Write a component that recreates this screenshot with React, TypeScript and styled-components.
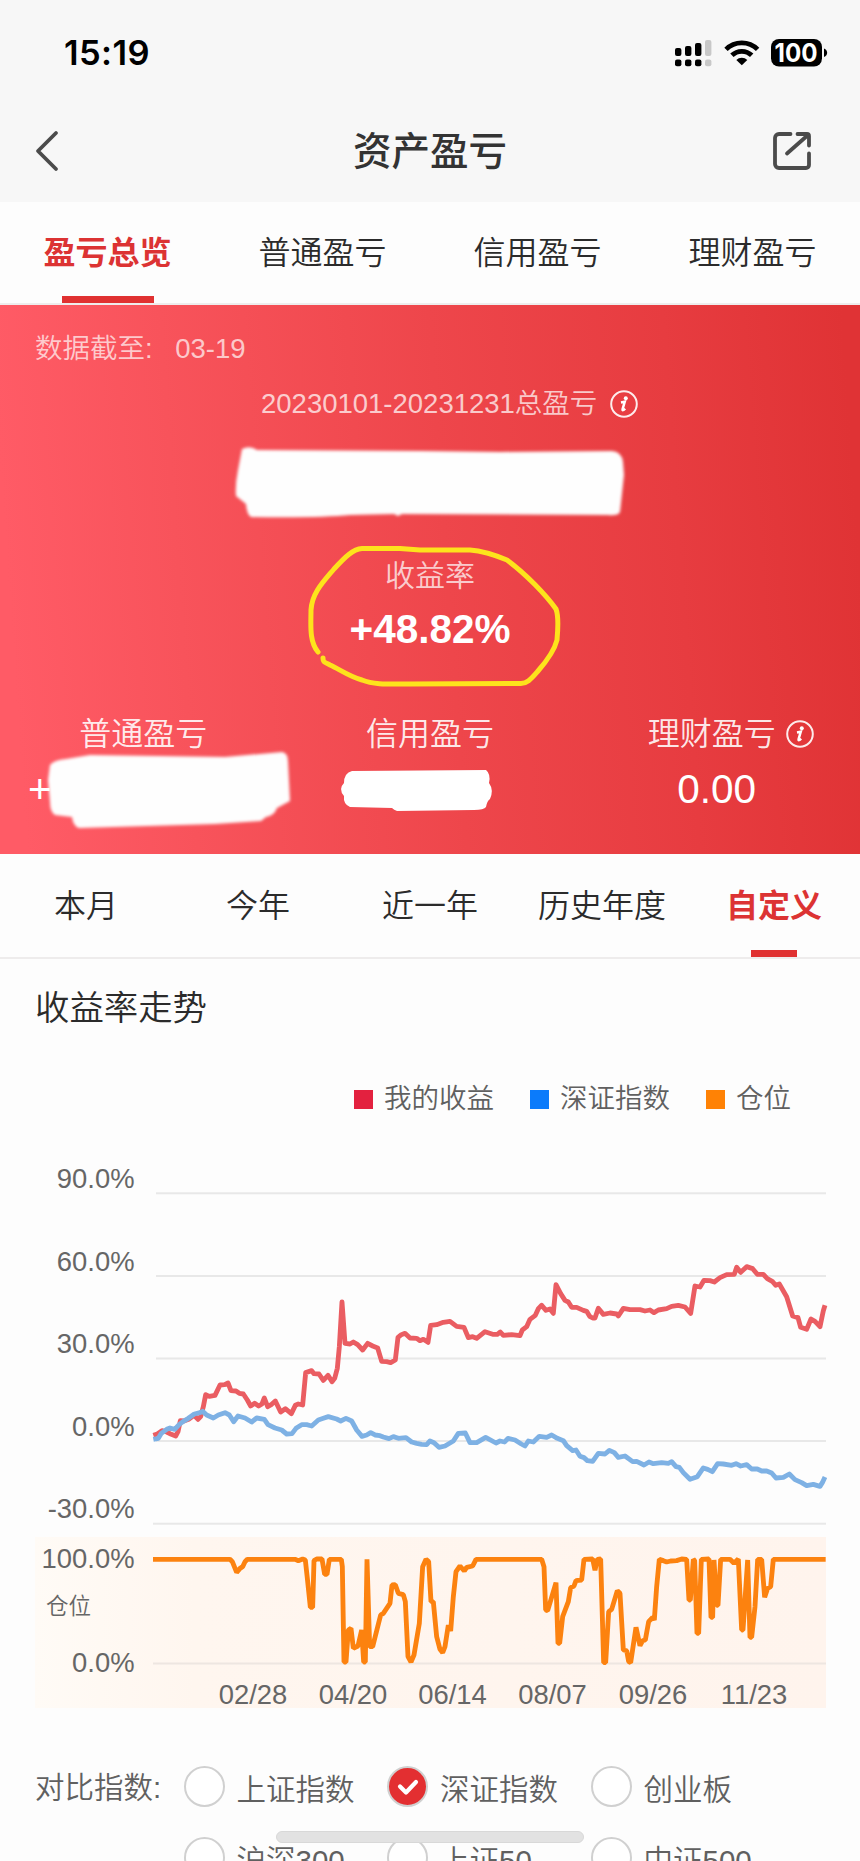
import React from "react";
import styled, { createGlobalStyle } from "styled-components";

const GlobalStyle = createGlobalStyle`
  * { box-sizing: border-box; }
  body {
    margin: 0;
    background: #fdfdfd;
    font-family: "Liberation Sans", "Noto Sans CJK SC", sans-serif;
    color: #333;
  }
`;

const Page = styled.main`
  position: relative;
  width: 860px;
  height: 1861px;
  overflow: hidden;
  background: #fdfdfd;
`;

const StatusBar = styled.header`
  display: flex;
  justify-content: space-between;
  align-items: center;
  height: 106px;
  padding: 0 32px 0 64px;
  background: #f7f7f7;
`;

const Clock = styled.span`
  font: 600 34.5px/40px Inter, sans-serif;
  color: #000;
  letter-spacing: 0.4px;
`;

const StatusIcons = styled.svg`
  display: block;
`;

const NavBar = styled.nav`
  display: flex;
  justify-content: space-between;
  align-items: center;
  height: 96px;
  padding: 0 48px 6px 34px;
  background: #f7f7f7;
`;

const NavTitle = styled.h1`
  margin: 2px 0 0 28px;
  font-size: 38.5px;
  line-height: 50px;
  font-weight: 500;
  color: #333;
`;

const TabRow = styled.div<{ $height: number }>`
  display: flex;
  height: ${(p) => p.$height}px;
  border-bottom: 2px solid #eeecec;
`;

const Tab = styled.div<{ $active?: boolean; $bar: number }>`
  position: relative;
  flex: 1;
  display: flex;
  align-items: center;
  justify-content: center;
  font-size: 32px;
  line-height: 40px;
  white-space: nowrap;
  font-weight: ${(p) => (p.$active ? 700 : 350)};
  color: ${(p) => (p.$active ? "#dc3333" : "#2b2b2b")};
  &::after {
    content: "";
    display: ${(p) => (p.$active ? "block" : "none")};
    position: absolute;
    bottom: 0;
    left: calc(50% - ${(p) => p.$bar / 2}px);
    width: ${(p) => p.$bar}px;
    height: 7px;
    background: #e03131;
  }
`;

const Hero = styled.section`
  position: relative;
  height: 549px;
  background: linear-gradient(86deg, #ff5b66 3%, #f8535b 22%, #ee464b 52%, #e73c40 78%, #e03335 98%);
  color: #fff;
`;

const AsOf = styled.div`
  display: flex;
  gap: 22.5px;
  padding: 27px 0 0 35px;
  font-size: 27.5px;
  line-height: 34px;
  font-weight: 350;
  color: rgba(255, 255, 255, 0.7);
`;

const TotalLine = styled.div`
  display: flex;
  align-items: center;
  gap: 13px;
  margin-top: 20px;
  padding-left: 261px;
  font-size: 27.5px;
  line-height: 36px;
  font-weight: 350;
  color: rgba(255, 255, 255, 0.72);
`;

const Rate = styled.div`
  display: flex;
  flex-direction: column;
  align-items: center;
  padding-top: 132px;
`;

const RateLabel = styled.span`
  font-size: 30px;
  line-height: 44px;
  font-weight: 350;
  color: rgba(255, 255, 255, 0.74);
`;

const RateValue = styled.strong`
  font-size: 40.5px;
  line-height: 50px;
  margin-top: 6px;
`;

const Breakdown = styled.div`
  display: grid;
  grid-template-columns: repeat(3, 1fr);
  margin-top: 58px;
`;

const BreakdownItem = styled.div`
  display: flex;
  flex-direction: column;
  align-items: center;
`;

const BreakdownLabel = styled.div<{ $shift?: number }>`
  display: flex;
  align-items: center;
  gap: 10px;
  height: 44px;
  margin-left: ${(p) => p.$shift ?? 0}px;
  font-size: 32px;
  line-height: 44px;
  font-weight: 350;
  color: rgba(255, 255, 255, 0.9);
`;

const BreakdownValue = styled.div<{ $left?: boolean }>`
  width: 100%;
  margin-top: 8px;
  padding-left: ${(p) => (p.$left ? 28 : 0)}px;
  text-align: ${(p) => (p.$left ? "left" : "center")};
  font-size: 40.5px;
  line-height: 50px;
`;

const Marks = styled.svg`
  position: absolute;
  inset: 0;
  pointer-events: none;
`;

const SectionTitle = styled.h2`
  margin: 25px 0 0 35px;
  font-size: 34.4px;
  line-height: 48px;
  font-weight: 350;
  color: #2b2b2b;
`;

const Legend = styled.div`
  display: flex;
  gap: 36px;
  margin-top: 47px;
  padding-left: 354px;
  height: 40px;
`;

const LegendItem = styled.span<{ $color: string }>`
  display: flex;
  align-items: center;
  gap: 11px;
  font-size: 27.5px;
  line-height: 40px;
  font-weight: 350;
  color: #606060;
  &::before {
    content: "";
    width: 19px;
    height: 19px;
    background: ${(p) => p.$color};
  }
`;

const Chart = styled.svg`
  display: block;
  margin-top: 31px;
  text {
    font-size: 27.4px;
    fill: #666;
  }
`;

const Compare = styled.section`
  display: flex;
  margin-top: 31px;
  padding-left: 35px;
  font-size: 29.5px;
  line-height: 42px;
  font-weight: 350;
  color: #606060;
`;

const CompareLabel = styled.span`
  width: 148.5px;
  padding-top: 1px;
`;

const Options = styled.div`
  display: grid;
  grid-template-columns: repeat(3, 203.5px);
  grid-auto-rows: 41px;
  row-gap: 30px;
`;

const Option = styled.label`
  display: flex;
  align-items: center;
  gap: 12px;
  white-space: nowrap;
  span { padding-top: 6px; }
`;

const Dot = styled.i<{ $on?: boolean }>`
  display: grid;
  place-items: center;
  width: 41px;
  height: 41px;
  border-radius: 50%;
  border: 2px solid #d0d0d0;
  background: ${(p) => (p.$on ? "#e32f31" : "#fff")};
`;

const HomeBar = styled.div`
  position: absolute;
  left: 276px;
  top: 1831px;
  width: 308px;
  height: 12px;
  border-radius: 6px;
  background: #e2e2e2;
  border: 1px solid #d8d8d8;
`;

const InfoIcon = () => (
  <svg width="28" height="28" viewBox="0 0 28 28" fill="none">
    <circle cx="14" cy="14" r="12.8" stroke="#fff" strokeOpacity="0.9" strokeWidth="2" />
    <circle cx="15.8" cy="8.2" r="2" fill="#fff" />
    <path d="M11 12.400l3.800-.7-2.200 7.500c-.4 1.500.9 1.100 2.500-.6" stroke="#fff" strokeWidth="2.500" />
  </svg>
);

const MY_RETURN =
  "460,856 472,852 486,842 500,846 514,853 527,858 534,845 541,812 552,813 566,808 582,796 594,808 602,800 610,770 617,734 628,739 645,736 660,705 674,704 684,699 693,722 708,723 718,730 730,732 742,750 752,768 764,760 776,768 786,762 793,744 803,770 815,763 826,753 842,786 856,776 874,791 886,766 895,762 908,765 917,668 935,662 942,671 957,672 970,691 984,676 996,695 1004,685 1012,655 1018,590 1026,456 1035,580 1050,582 1060,576 1073,584 1088,600 1103,580 1118,588 1133,594 1145,634 1160,635 1172,638 1186,630 1194,562 1204,554 1215,550 1230,564 1250,565 1260,572 1270,568 1284,577 1292,526 1310,524 1330,517 1350,514 1370,529 1392,532 1405,563 1418,560 1430,565 1455,545 1478,553 1492,553 1501,546 1510,556 1535,554 1560,557 1567,540 1580,530 1590,508 1606,496 1615,476 1625,466 1638,481 1650,477 1660,490 1668,404 1682,431 1695,451 1705,456 1715,472 1730,472 1750,481 1760,484 1769,499 1778,504 1785,504 1795,475 1810,493 1830,489 1850,492 1855,498 1870,475 1890,479 1920,479 1935,483 1950,480 1962,488 1975,480 2000,476 2015,469 2035,466 2055,471 2072,490 2085,408 2100,411 2112,391 2130,392 2143,396 2160,383 2180,374 2203,373 2210,352 2222,367 2240,350 2258,356 2272,373 2290,373 2302,386 2318,395 2327,406 2338,402 2360,440 2378,498 2394,503 2402,532 2420,538 2433,507 2445,514 2460,530 2470,482 2475,466";

const INDEX_RETURN =
  "460,868 475,865 484,850 500,838 510,834 524,838 538,823 550,814 565,805 583,792 600,788 608,784 620,795 640,804 655,795 675,788 688,795 701,815 714,798 735,804 755,816 770,804 793,808 804,824 825,834 845,840 860,852 876,851 888,835 905,824 920,824 935,828 955,810 970,805 985,800 1010,807 1022,813 1038,805 1055,813 1070,840 1086,859 1100,855 1112,848 1125,855 1140,857 1150,861 1167,866 1180,860 1195,865 1218,863 1235,876 1250,880 1265,883 1280,884 1290,873 1302,878 1317,892 1335,888 1360,873 1375,850 1396,849 1410,878 1430,878 1457,862 1488,879 1500,873 1514,876 1524,865 1545,870 1564,882 1575,888 1585,873 1600,876 1618,859 1640,862 1655,855 1672,865 1690,872 1700,887 1718,902 1728,900 1740,919 1752,923 1762,932 1778,934 1795,910 1815,912 1828,901 1843,908 1855,922 1875,918 1898,935 1910,934 1932,945 1947,936 1960,941 1985,938 2005,940 2015,935 2028,950 2038,952 2050,968 2070,988 2092,980 2110,954 2123,958 2137,965 2153,941 2170,942 2195,946 2208,941 2222,948 2240,944 2255,957 2272,957 2285,963 2300,963 2315,969 2328,984 2350,982 2368,972 2385,989 2405,998 2420,1007 2440,1003 2460,1009 2467,998 2475,981";

const POSITION =
  "459,88 690,88 697,95 710,127 720,115 728,110 735,95 742,88 885,88 895,92 908,87 916,90 922,145 931,232 938,232 942,92 950,87 966,87 974,133 981,133 988,88 1024,88 1027,110 1032,396 1038,396 1045,300 1053,295 1060,355 1074,348 1085,300 1091,396 1096,396 1101,88 1109,350 1118,350 1142,255 1150,250 1170,220 1176,165 1186,164 1195,190 1210,194 1216,215 1224,380 1233,396 1242,375 1258,280 1268,110 1278,88 1286,95 1293,215 1300,215 1310,320 1320,358 1328,368 1335,350 1345,285 1352,303 1360,200 1368,125 1380,108 1393,123 1400,112 1418,108 1428,88 1625,88 1632,110 1637,240 1643,242 1668,158 1674,340 1679,340 1688,260 1705,215 1712,173 1722,168 1728,152 1745,150 1752,88 1778,87 1785,121 1792,88 1802,87 1811,398 1817,398 1826,245 1835,238 1852,182 1860,190 1870,360 1880,362 1886,395 1892,398 1908,292 1920,347 1928,332 1936,330 1946,275 1958,262 1963,270 1970,170 1978,88 1990,92 2000,96 2012,93 2030,92 2045,87 2060,88 2067,210 2071,210 2080,88 2084,92 2091,310 2096,310 2104,88 2127,87 2133,262 2138,262 2142,90 2150,226 2154,226 2162,88 2190,88 2202,100 2215,87 2225,300 2229,300 2243,90 2250,322 2255,322 2265,230 2273,88 2285,88 2294,202 2303,175 2312,170 2320,88 2477,88";

const returnTicks = ["90.0%", "60.0%", "30.0%", "0.0%", "-30.0%"];
const dates = [
  ["02/28", 253],
  ["04/20", 353],
  ["06/14", 452.5],
  ["08/07", 552.5],
  ["09/26", 653],
  ["11/23", 754],
] as const;

const overviewTabs = ["盈亏总览", "普通盈亏", "信用盈亏", "理财盈亏"];
const periodTabs = ["本月", "今年", "近一年", "历史年度", "自定义"];
const indices = ["上证指数", "深证指数", "创业板", "沪深300", "上证50", "中证500"];

const DeviceStatus = () => (
  <StatusIcons width="153" height="40" viewBox="0 0 153 40">
    {[
      [0, 15, 8],
      [10, 13, 10],
      [20, 10, 13],
    ].map(([x, y, h]) => (
      <g key={x}>
        <rect x={x} y={y} width="6.4" height={h} rx="2" />
        <rect x={x} y="26.6" width="6.4" height="6.6" rx="2" />
      </g>
    ))}
    <g fill="#c8c8c8">
      <rect x="30" y="7" width="6.4" height="16" rx="2" />
      <rect x="30" y="26.6" width="6.4" height="6.6" rx="2" />
    </g>
    <g fill="none" stroke="#000" strokeWidth="4.8">
      <path d="M51 16.400a22.500 22.500 0 0 1 31.600 0" />
      <path d="M56.900 22.300a14.200 14.200 0 0 1 19.800 0" />
    </g>
    <path d="M61.300 26.900a8 8 0 0 1 11 0l-5.500 5.400z" />
    <rect x="96" y="6" width="51" height="27.500" rx="8" />
    <path d="M149 15.500c4.200 1.500 4.200 7 0 8.500z" />
    <text x="121" y="29" textAnchor="middle" textLength="43" lengthAdjust="spacingAndGlyphs" fontFamily="Inter" fontWeight="700" fontSize="25.500" fill="#fff">100</text>
  </StatusIcons>
);

export default function App() {
  return (
    <Page>
      <GlobalStyle />
      <StatusBar>
        <Clock>15:19</Clock>
        <DeviceStatus />
      </StatusBar>
      <NavBar>
        <svg width="26" height="42" viewBox="0 0 26 42" fill="none" stroke="#4b4b4b" strokeWidth="3.800" strokeLinecap="round" strokeLinejoin="round">
          <path d="M22 3L4 21l18 18" />
        </svg>
        <NavTitle>资产盈亏</NavTitle>
        <svg width="40" height="40" viewBox="0 0 40 40" fill="none" stroke="#4b4b4b" strokeWidth="3.800" strokeLinecap="round" strokeLinejoin="round">
          <path d="M18.500 3H7a4 4 0 0 0-4 4v26a4 4 0 0 0 4 4h27a3 3 0 0 0 3-3V22.500M25.500 3H35a2 2 0 0 1 2 2v9.500M36 4L15 22.500" />
        </svg>
      </NavBar>
      <TabRow $height={103}>
        {overviewTabs.map((t, i) => (
          <Tab key={t} $active={i === 0} $bar={92}>{t}</Tab>
        ))}
      </TabRow>

      <Hero>
        <AsOf>
          <span>数据截至:</span>
          <span>03-19</span>
        </AsOf>
        <TotalLine>
          <span>20230101-20231231总盈亏</span>
          <InfoIcon />
        </TotalLine>
        <Rate>
          <RateLabel>收益率</RateLabel>
          <RateValue>+48.82%</RateValue>
        </Rate>
        <Breakdown>
          <BreakdownItem>
            <BreakdownLabel>普通盈亏</BreakdownLabel>
            <BreakdownValue $left>+</BreakdownValue>
          </BreakdownItem>
          <BreakdownItem>
            <BreakdownLabel>信用盈亏</BreakdownLabel>
          </BreakdownItem>
          <BreakdownItem>
            <BreakdownLabel $shift={28}>
              理财盈亏
              <InfoIcon />
            </BreakdownLabel>
            <BreakdownValue>0.00</BreakdownValue>
          </BreakdownItem>
        </Breakdown>
        <Marks width="860" height="549" viewBox="0 305 860 549">
          <defs>
            <filter id="soft" x="-10%" y="-20%" width="120%" height="140%">
              <feGaussianBlur stdDeviation="1.500" />
            </filter>
          </defs>
          <g fill="#fefefe" filter="url(#soft)">
            <path d="M242 449Q250 445 257 450L420 451 500 452 612 451Q622 452 623 462L624 475 620 512Q618 516 608 515L402 514 398 516 394 514 350 515Q320 518 251 517Q247 515 246 504L236 496Q235 485 238 470Z" />
            <path d="M50 765Q54 760 66 759L90 755 225 757 282 752Q288 753 288 761L290 801 277 808Q274 816 266 817L261 821 215 824 79 828Q73 826 72 817L55 815Q50 812 50 802L48 780Z" />
          </g>
          <path fill="#fff" d="M352 771L486 770Q491 774 489 783Q494 790 490 799Q487 801 486 807Q484 810 474 810L397 811Q394 810 392 808L350 807Q343 804 344 796Q338 789 344 783Q344 773 352 771Z" />
          <path d="M318 652C309 641 311 625 311 610C312 593 323 582 334 569C345 557 353 549 362 548.500L400 548.500L420 550L470 550C484 551 495 555 507 560C526 574 546 595 556 609C559 617 558 629 557 640C554 652 545 663 538 671C531 679 527 684 520 683.500L410 684C390 684 374 685 362 680C350 677 339 669 330 665C324 662 323 662 323 658" fill="none" stroke="#fde31c" strokeWidth="5" strokeLinecap="round" strokeLinejoin="round" />
        </Marks>
      </Hero>

      <TabRow $height={105}>
        {periodTabs.map((t, i) => (
          <Tab key={t} $active={i === 4} $bar={46}>{t}</Tab>
        ))}
      </TabRow>

      <SectionTitle>收益率走势</SectionTitle>
      <Legend>
        <LegendItem $color="#e3213f">我的收益</LegendItem>
        <LegendItem $color="#0b7bfb">深证指数</LegendItem>
        <LegendItem $color="#ff8205">仓位</LegendItem>
      </Legend>

      <Chart width="860" height="585" viewBox="0 1150 860 585">
        <defs>
          <linearGradient id="positionBg">
            <stop offset="0" stopColor="#fffbf6" />
            <stop offset="0.200" stopColor="#fff6ef" />
            <stop offset="1" stopColor="#fff4ed" />
          </linearGradient>
        </defs>
        <rect x="35" y="1537" width="791" height="171" fill="url(#positionBg)" />
        {returnTicks.map((t, i) => (
          <g key={t}>
            <line x1={i === 4 ? 153 : 156} x2="826" y1={1193.300 + i * 82.600} y2={1193.300 + i * 82.600} stroke="#e8e8e8" strokeWidth="2" />
            <text x="134.500" y={1188 + i * 82.600} textAnchor="end">{t}</text>
          </g>
        ))}
        <line x1="153" x2="826" y1="1663.500" y2="1663.500" stroke="#eee6e1" strokeWidth="2" />
        <text x="134.500" y="1568" textAnchor="end">100.0%</text>
        <text x="46" y="1614" style={{ fontSize: 22.5, fontWeight: 350 }}>仓位</text>
        <text x="134.500" y="1671.500" textAnchor="end">0.0%</text>
        {dates.map(([d, x]) => (
          <text key={d} x={x} y="1703.500" textAnchor="middle">{d}</text>
        ))}
        <g fill="none" strokeWidth="14.500" strokeLinejoin="round">
          <polyline transform="translate(0 1150) scale(0.33333)" points={MY_RETURN} stroke="#ea5d62" />
          <polyline transform="translate(0 1150) scale(0.33333)" points={INDEX_RETURN} stroke="#7eb1e4" />
          <polyline transform="translate(0 1530) scale(0.33333)" points={POSITION} stroke="#fc820f" strokeLinejoin="bevel" />
        </g>
      </Chart>

      <Compare>
        <CompareLabel>对比指数:</CompareLabel>
        <Options>
          {indices.map((name, i) => (
            <Option key={name}>
              <Dot $on={i === 1}>
                {i === 1 && (
                  <svg width="26" height="24" viewBox="0 0 26 24" fill="none" stroke="#fff" strokeWidth="4.200" strokeLinecap="round" strokeLinejoin="round">
                    <path d="M5 11.500l6 6L21 7" />
                  </svg>
                )}
              </Dot>
              <span>{name}</span>
            </Option>
          ))}
        </Options>
      </Compare>
      <HomeBar />
    </Page>
  );
}
